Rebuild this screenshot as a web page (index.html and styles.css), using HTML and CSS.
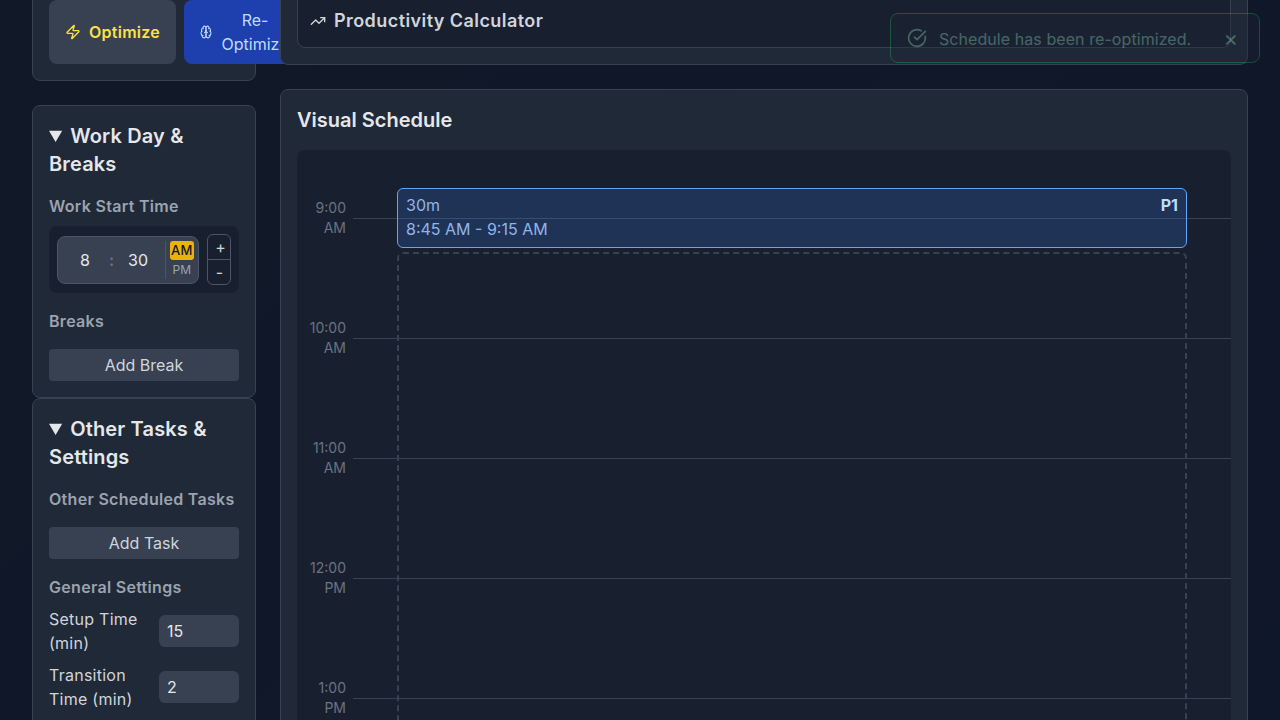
FILE: index.html
```html
<!DOCTYPE html>
<html lang="en">
<head>
  <meta charset="UTF-8">
  <meta name="viewport" content="width=device-width, initial-scale=1">
  <title>Schedule Optimizer</title>
  <link rel="stylesheet" href="styles.css">
</head>
<body>

<div class="layout">
  <aside class="side">
    <section class="panel actions">
      <button class="act act-optimize">
        <svg class="ic-zap" viewBox="0 0 24 24"><path d="M4 14a1 1 0 0 1-.78-1.63l9.9-10.2a.5.5 0 0 1 .86.46l-1.92 6.02A1 1 0 0 0 13 10h7a1 1 0 0 1 .78 1.63l-9.9 10.2a.5.5 0 0 1-.86-.46l1.92-6.02A1 1 0 0 0 11 14z"/></svg>
        <span>Optimize</span>
      </button>
      <button class="act act-reopt">
        <svg class="ic-brain" viewBox="0 0 24 24" preserveAspectRatio="none"><path d="M12 5a3 3 0 1 0-5.997.125 4 4 0 0 0-2.526 5.77 4 4 0 0 0 .556 6.588A4 4 0 1 0 12 18Z"/><path d="M12 5a3 3 0 1 1 5.997.125 4 4 0 0 1 2.526 5.77 4 4 0 0 1-.556 6.588A4 4 0 1 1 12 18Z"/><path d="M15 13a4.5 4.5 0 0 1-3-4 4.5 4.5 0 0 1-3 4"/><path d="M17.599 6.5a3 3 0 0 0 .399-1.375"/><path d="M6.003 5.125A3 3 0 0 0 6.401 6.5"/><path d="M3.477 10.896a4 4 0 0 1 .585-.396"/><path d="M19.938 10.5a4 4 0 0 1 .585.396"/><path d="M6 18a4 4 0 0 1-1.967-.516"/><path d="M19.967 17.484A4 4 0 0 1 18 18"/></svg>
        <span>Re-Optimize</span>
      </button>
    </section>

    <details class="panel group" open>
      <summary>Work Day &amp; Breaks</summary>
      <div class="label">Work Start Time</div>
      <div class="time-wrap">
        <div class="time-box">
          <span class="num">8</span>
          <span class="colon">:</span>
          <span class="num">30</span>
          <div class="ampm">
            <span class="am">AM</span>
            <span class="pm">PM</span>
          </div>
        </div>
        <div class="stepper">
          <span>+</span>
          <span>-</span>
        </div>
      </div>
      <div class="label">Breaks</div>
      <button class="add-btn">Add Break</button>
    </details>

    <details class="panel group joined" open>
      <summary>Other Tasks &amp; Settings</summary>
      <div class="label">Other Scheduled Tasks</div>
      <button class="add-btn">Add Task</button>
      <div class="label">General Settings</div>
      <div class="setting">
        <span>Setup Time (min)</span>
        <div class="field">15</div>
      </div>
      <div class="setting">
        <span>Transition Time (min)</span>
        <div class="field">2</div>
      </div>
    </details>
  </aside>

  <main class="content">
    <section class="panel calc">
      <div class="calc-head">
        <svg class="ic-trend" viewBox="0 0 24 24"><path d="M22 7 13.5 15.5 8.5 10.5 2 17"/><path d="M16 7h6v6"/></svg>
        <span>Productivity Calculator</span>
      </div>
    </section>

    <section class="panel schedule">
      <h2>Visual Schedule</h2>
      <div class="timeline">
        <div class="hour"><span>9:00 AM</span></div>
        <div class="hour"><span>10:00 AM</span></div>
        <div class="hour"><span>11:00 AM</span></div>
        <div class="hour"><span>12:00 PM</span></div>
        <div class="hour"><span>1:00 PM</span></div>

        <div class="event">
          <div class="event-top"><span>30m</span><b>P1</b></div>
          <div>8:45 AM - 9:15 AM</div>
        </div>
        <div class="slot"></div>
      </div>
    </section>
  </main>
</div>

<div class="toast">
  <svg class="ic-check" viewBox="0 0 24 24"><path d="M21.8 10A10 10 0 1 1 17 3.34"/><path d="m9 11 3 3L22 4"/></svg>
  <span class="toast-text">Schedule has been re-optimized.</span>
  <span class="toast-close">&times;</span>
</div>

</body>
</html>
```

FILE: styles.css
```css
html, body {
  height: 720px;
  overflow: hidden;
}
body {
  margin: 0;
  font-family: Inter, "Liberation Sans", sans-serif;
  font-size: 16px;
  line-height: 24px;
  color: #d1d5db;
  background: linear-gradient(135deg, #111827, #0f172a);
}
button {
  font-family: inherit;
  font-size: 16px;
  line-height: 24px;
  border: none;
}
svg {
  fill: none;
  stroke: currentColor;
  stroke-width: 2;
  stroke-linecap: round;
  stroke-linejoin: round;
  flex-shrink: 0;
}

.layout {
  display: grid;
  grid-template-columns: 224px 968px;
  gap: 24px;
  padding-left: 32px;
  margin-top: -17px;
  align-items: start;
}
.panel {
  background: #1f2937;
  border: 1px solid #374151;
  border-radius: 8px;
  padding: 16px;
}

/* left column */
.side {
  display: flex;
  flex-direction: column;
  gap: 24px;
}
.actions {
  display: flex;
  gap: 8px;
}
.act {
  flex: 0 0 127px;
  height: 64px;
  padding: 8px 16px;
  border-radius: 8px;
  display: flex;
  align-items: center;
  justify-content: center;
  gap: 8px;
  text-align: center;
}
.act-optimize {
  background: #374151;
  color: #fde047;
  font-weight: 600;
  letter-spacing: 0.25px;
}
.ic-zap {
  width: 16px;
  height: 16px;
}
.act-reopt {
  flex-basis: 122px;
  background: #1e40af;
  color: #bfdbfe;
}
.ic-brain {
  width: 12px;
  height: 14px;
}

.group summary {
  font-size: 20px;
  line-height: 28px;
  font-weight: 600;
  letter-spacing: 0.15px;
  color: #e5e7eb;
  cursor: pointer;
}
.joined {
  margin-top: -24px;
}
.label {
  margin-top: 16px;
  font-weight: 600;
  letter-spacing: 0.3px;
  color: #9ca3af;
}
.add-btn {
  display: block;
  width: 100%;
  height: 32px;
  margin-top: 16px;
  padding: 0;
  background: #374151;
  color: #d1d5db;
  border-radius: 4px;
}
.label + .time-wrap {
  margin-top: 8px;
}

.time-wrap {
  display: flex;
  align-items: center;
  gap: 8px;
  padding: 8px;
  background: #182030;
  border-radius: 8px;
}
.time-box {
  width: 142px;
  height: 48px;
  box-sizing: border-box;
  display: flex;
  align-items: center;
  padding-left: 7px;
  background: #374151;
  border: 1px solid #4b5563;
  border-radius: 8px;
  color: #e5e7eb;
}
.num {
  width: 40px;
  text-align: center;
}
.colon {
  width: 13px;
  text-align: center;
  font-weight: 600;
  color: #6b7280;
}
.ampm {
  margin-left: 7px;
  padding-left: 4px;
  height: 38px;
  border-left: 1px solid #4b5563;
  display: flex;
  flex-direction: column;
  align-items: center;
  font-size: 13px;
  line-height: 19px;
}
.am {
  padding: 0 1px;
  background: #eab308;
  color: #111827;
  font-weight: 500;
  letter-spacing: 0.3px;
  border-radius: 3px;
}
.pm {
  color: #9ca3af;
  font-size: 12px;
}
.stepper {
  width: 24px;
  height: 51px;
  box-sizing: border-box;
  padding-left: 3px;
  border: 1px solid #4b5563;
  border-radius: 6px;
  display: flex;
  flex-direction: column;
  text-align: center;
  color: #d1d5db;
  line-height: 24px;
}
.stepper span + span {
  border-top: 1px solid #4b5563;
  margin-left: -3px;
  padding-left: 1px;
}

.setting {
  display: grid;
  grid-template-columns: 1fr 80px;
  gap: 8px;
  align-items: center;
  margin-top: 8px;
  letter-spacing: 0.25px;
  color: #d1d5db;
}
.field {
  height: 32px;
  line-height: 32px;
  padding-left: 8px;
  background: #374151;
  border-radius: 6px;
  letter-spacing: 0;
  color: #e5e7eb;
}

/* main column */
.content {
  margin-top: -6px;
  display: flex;
  flex-direction: column;
  gap: 24px;
  position: relative;
}
.calc-head {
  display: flex;
  align-items: center;
  gap: 8px;
  padding: 12px;
  background: #182030;
  border: 1px solid #374151;
  border-radius: 8px;
  font-size: 18px;
  line-height: 28px;
  font-weight: 600;
  letter-spacing: 0.43px;
  color: #d1d5db;
}
.ic-trend {
  width: 16px;
  height: 16px;
}
.schedule h2 {
  margin: 0 0 16px;
  font-size: 20px;
  line-height: 28px;
  font-weight: 600;
  color: #e5e7eb;
}
.timeline {
  position: relative;
  padding-top: 68px;
  height: 900px;
  background: #182030;
  border-radius: 8px;
}
.hour {
  height: 120px;
  margin-left: 56px;
  border-top: 1px solid #374151;
  box-sizing: border-box;
  position: relative;
}
.hour span {
  position: absolute;
  right: 100%;
  top: -21px;
  width: 44px;
  margin-right: 7px;
  text-align: right;
  font-size: 14px;
  line-height: 20px;
  color: #6b7280;
}
.event {
  position: absolute;
  left: 100px;
  top: 38px;
  width: 790px;
  height: 60px;
  box-sizing: border-box;
  padding: 4px 8px;
  background: rgba(59, 130, 246, 0.2);
  border: 1px solid #60a5fa;
  border-radius: 6px;
  color: #93b4e8;
}
.event-top {
  display: flex;
  justify-content: space-between;
}
.event-top b {
  color: #bfdbfe;
  font-weight: 700;
}
.slot {
  position: absolute;
  left: 100px;
  top: 102px;
  width: 790px;
  height: 700px;
  box-sizing: border-box;
  border: 2px dashed #374151;
  border-radius: 6px;
}

/* toast, already fading out */
.toast {
  position: fixed;
  top: 13px;
  left: 890px;
  width: 370px;
  height: 50px;
  box-sizing: border-box;
  display: flex;
  align-items: center;
  padding: 0 21px 0 16px;
  background: #1f2937;
  border: 1px solid #22c55e;
  border-radius: 8px;
  color: #a7f3d0;
  opacity: 0.33;
}
.ic-check {
  width: 20px;
  height: 20px;
}
.toast-text {
  margin-left: 12px;
  padding-top: 1px;
  flex: 1;
  letter-spacing: 0.07px;
}
.toast-close {
  font-size: 22px;
}
```
